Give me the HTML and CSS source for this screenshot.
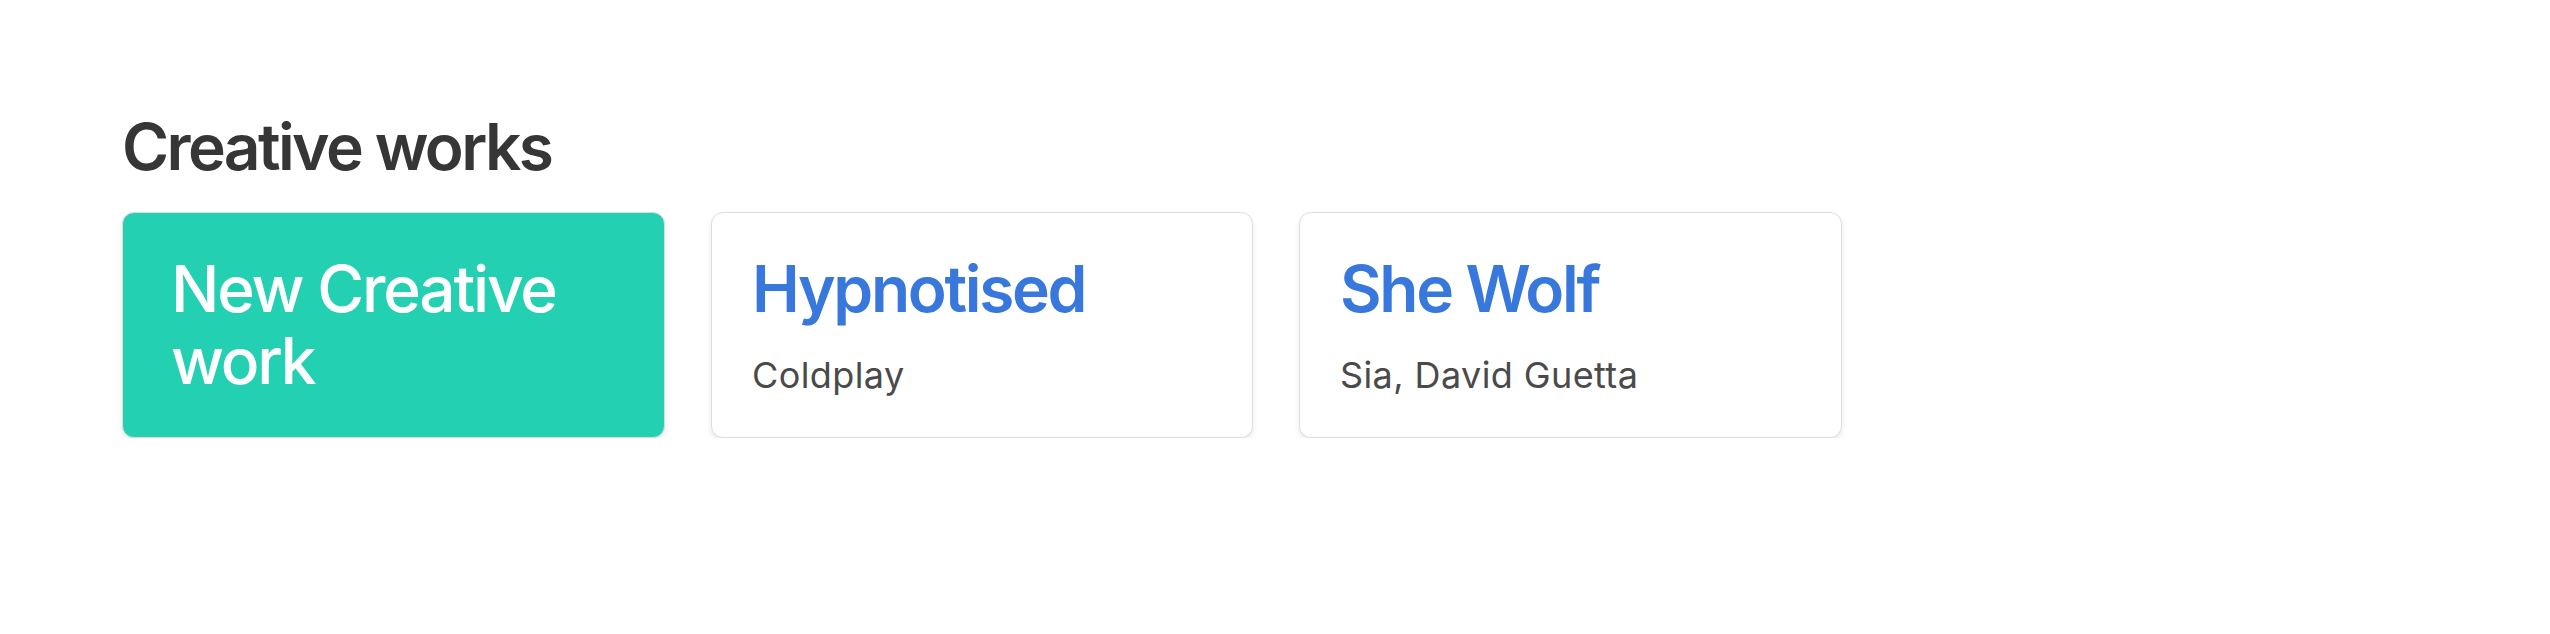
FILE: index.html
```html
<!DOCTYPE html>
<html lang="en">
<head>
<meta charset="utf-8">
<title>Creative works</title>
<link rel="stylesheet" href="styles.css">
</head>
<body>
<section class="section">
  <h1 class="heading">Creative works</h1>
  <div class="cards">
    <a class="card card-new" href="#">
      <span class="card-title-new">New Creative work</span>
    </a>
    <a class="card" href="#">
      <span class="card-title">Hypnotised</span>
      <span class="card-sub">Coldplay</span>
    </a>
    <a class="card" href="#">
      <span class="card-title">She Wolf</span>
      <span class="card-sub">Sia, David Guetta</span>
    </a>
  </div>
</section>
</body>
</html>
```
FILE: styles.css
```css
html, body {
  margin: 0;
  padding: 0;
  background: #ffffff;
}
body {
  font-family: Inter, "Noto Sans", "Liberation Sans", sans-serif;
  color: #4a4a4a;
}
.section {
  padding: 111px 48px 0 122px;
}
.heading {
  margin: 0 0 29px 0;
  font-size: 64px;
  line-height: 72px;
  font-weight: 600;
  color: #363636;
  letter-spacing: -2.6px;
}
.cards {
  display: grid;
  grid-template-columns: 543px 542px 543px;
  column-gap: 46px;
  align-items: stretch;
}
.card {
  display: flex;
  flex-direction: column;
  box-sizing: border-box;
  height: 226px;
  padding: 40px 40px;
  background: #ffffff;
  border: 1px solid #dedede;
  border-radius: 12px;
  box-shadow: 0 3px 6px -1px rgba(10, 10, 10, 0.12);
  text-decoration: none;
}
.card-new {
  background: #23d1b2;
  border-color: #dcdcdc;
  padding: 40px 48px;
}
.card-title-new {
  font-size: 64px;
  line-height: 72px;
  font-weight: 500;
  color: #ffffff;
  letter-spacing: -2.2px;
}
.card-title {
  font-size: 64px;
  line-height: 72px;
  font-weight: 600;
  color: #3877db;
  letter-spacing: -2.3px;
}
.card-sub {
  margin-top: 30px;
  font-size: 36px;
  line-height: 40px;
  font-weight: 400;
  color: #4a4a4a;
  letter-spacing: 0.4px;
}
```
